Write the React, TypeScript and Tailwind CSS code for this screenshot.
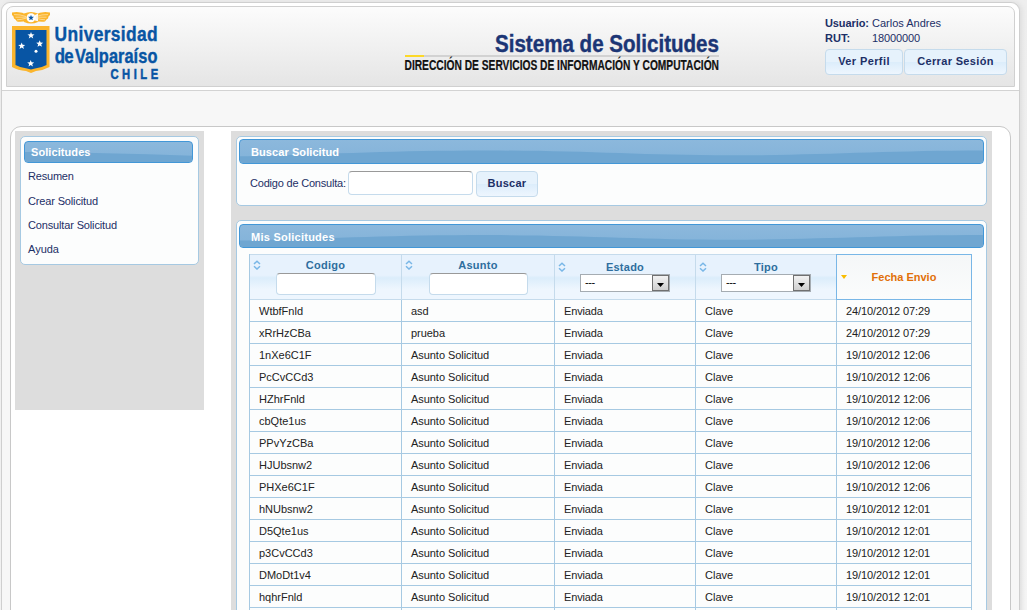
import React from "react";

const rows: [string, string, string][] = [
  ["WtbfFnld", "asd", "24/10/2012 07:29"],
  ["xRrHzCBa", "prueba", "24/10/2012 07:29"],
  ["1nXe6C1F", "Asunto Solicitud", "19/10/2012 12:06"],
  ["PcCvCCd3", "Asunto Solicitud", "19/10/2012 12:06"],
  ["HZhrFnld", "Asunto Solicitud", "19/10/2012 12:06"],
  ["cbQte1us", "Asunto Solicitud", "19/10/2012 12:06"],
  ["PPvYzCBa", "Asunto Solicitud", "19/10/2012 12:06"],
  ["HJUbsnw2", "Asunto Solicitud", "19/10/2012 12:06"],
  ["PHXe6C1F", "Asunto Solicitud", "19/10/2012 12:06"],
  ["hNUbsnw2", "Asunto Solicitud", "19/10/2012 12:01"],
  ["D5Qte1us", "Asunto Solicitud", "19/10/2012 12:01"],
  ["p3CvCCd3", "Asunto Solicitud", "19/10/2012 12:01"],
  ["DMoDt1v4", "Asunto Solicitud", "19/10/2012 12:01"],
  ["hqhrFnld", "Asunto Solicitud", "19/10/2012 12:01"],
];

const GRID = "grid grid-cols-[152px_153px_141px_141px_135px]";
const STAR = "M0-3.6L.9-1.2 3.5-1.1 1.5.5 2.2 3 0 1.6-2.2 3-1.5.5-3.5-1.1-.9-1.2Z";

function Logo() {
  return (
    <svg className="block overflow-visible" width="150" height="72" viewBox="10 10 150 72" fontFamily="'Liberation Sans', Arial, sans-serif" fontWeight="bold" fill="#0855a4">
      <path d="M12 12.500Q21 11 27 15V20.500Q21 22.500 17 21.500L15.500 19.500 14 18.500 13.500 16.500 12 15ZM50 12.500Q41 11 35 15V20.500Q41 22.500 45 21.500L46.500 19.500 48 18.500 48.500 16.500 50 15ZM24 13.500Q31 10.500 38 13.500V22Q31 25 24 22Z" fill="#fbb52c" />
      <path d="M14 14.600Q20 14.300 26 16.500M15.500 17.200H26M17 19.800Q21 19.700 26 18.200M48 14.600Q42 14.300 36 16.500M46.500 17.200H36M45 19.800Q41 19.700 36 18.200" stroke="#fdf0d4" strokeWidth=".6" fill="none" />
      <circle cx="31" cy="17.700" r="4.500" fill="#fff" />
      <path transform="translate(31 17.800) scale(.85)" d={STAR} />
      <path d="M12 26H49.500V67Q43 70.500 36 71L31 73 26 71Q18 70.500 12 67Z" fill="#fbb52c" />
      <path d="M15.500 30H46.500V65Q41 68 35 68.500L31 69.500 27 68.500Q21 68 15.500 65Z" />
      <g fill="#fff">
        <path transform="translate(31 35.500)" d={STAR} />
        <path transform="translate(21.700 46)" d={STAR} />
        <path transform="translate(39.700 43.800)" d={STAR} />
        <path transform="translate(30.700 63.500)" d={STAR} />
        <circle cx="36" cy="51.200" r="1.500" />
      </g>
      <g fontSize="20" stroke="#0855a4" strokeWidth=".4">
        <text transform="translate(54.600 41) scale(.87 1)" textLength="118.500" lengthAdjust="spacing">Universidad</text>
        <text transform="translate(54.800 62.500) scale(.84 1)" textLength="22.500" lengthAdjust="spacing">de</text>
        <text transform="translate(75 62.500) scale(.82 1)" textLength="100.500" lengthAdjust="spacing">Valparaíso</text>
      </g>
      <text transform="translate(110.500 79) scale(.8 1)" fontSize="14" textLength="59.500" lengthAdjust="spacing" stroke="#0855a4" strokeWidth=".5">CHILE</text>
    </svg>
  );
}

function Banner() {
  return (
    <svg className="block overflow-visible" width="318" height="44" viewBox="403 30 318 44" fontFamily="'Liberation Sans', Arial, sans-serif" fontWeight="bold">
      <path d="M405 56H719" stroke="#d2d2d2" strokeWidth="2" />
      <path d="M405 56H424" stroke="#fcd828" strokeWidth="2" />
      <text x="495" y="51.500" fontSize="23.500" fill="#1b3575" stroke="#1b3575" strokeWidth=".4" textLength="224" lengthAdjust="spacingAndGlyphs">Sistema de Solicitudes</text>
      <text x="404.500" y="70" fontSize="14" fill="#111" stroke="#111" strokeWidth=".2" textLength="314.500" lengthAdjust="spacingAndGlyphs">DIRECCIÓN DE SERVICIOS DE INFORMACIÓN Y COMPUTACIÓN</text>
    </svg>
  );
}

function TitleBar({ text, className, wide }: { text: string; className: string; wide?: boolean }) {
  return (
    <div className={"relative overflow-hidden rounded-[4px] border border-[#4297d7] bg-linear-to-b from-[#8cb8dc] to-[#82b2d9] font-bold tracking-[0.08px] text-white " + className}>
      <svg className="absolute inset-0 h-full w-full" preserveAspectRatio="none" viewBox={wide ? "0 0 745 24" : "0 0 169 22"}>
        <path fill="#6fa6d1" d={wide ? "M0 17C90 15 150 11 248 11S400 16 492 16S650 11 745 11V24H0Z" : "M0 11C50 11 110 13 169 15V22H0Z"} />
      </svg>
      <span className="relative">{text}</span>
    </div>
  );
}

function Button({ children, className }: { children: React.ReactNode; className: string }) {
  return (
    <button className={"rounded-[4px] border border-[#c5dbec] bg-[linear-gradient(#e6f2fc_0%,#e6f2fc_48%,#dcedfb_52%,#eef6fe_100%)] pb-[2px] font-bold whitespace-nowrap text-[#1c2f66] " + className}>
      {children}
    </button>
  );
}

function SortIcon() {
  return (
    <svg className="absolute left-[3px] top-[6px]" width="8" height="10" viewBox="0 0 8 10" fill="none" stroke="#79b7e7" strokeWidth="1.500">
      <path d="M1 4L4 1.200 7 4M1 6.200L4 9 7 6.200" />
    </svg>
  );
}

const HEAD = "relative border-r border-[#c5dbec] bg-[linear-gradient(#e7f2fd_0%,#e7f2fd_46%,#dbedfb_52%,#eef6fe_78%,#eef6fe_100%)] text-center font-bold tracking-[0.25px] text-[#2e6e9e]";
const FIELD = "rounded-[4px] border border-[#c5dbec] border-t-[#999] bg-white outline-none";

function SelectHead({ label }: { label: string }) {
  return (
    <div className={HEAD + " flex flex-col items-center pt-[6px]"}>
      <span className="absolute left-0 top-px"><SortIcon /></span>
      <span className="leading-[13px]">{label}</span>
      <div className="flex h-[18px] w-[90px] justify-between border border-[#a5acb2] bg-white text-left font-normal text-black">
        <span className="pl-[4px] leading-[15px] tracking-[-0.4px]">---</span>
        <span className="flex h-4 w-[17px] items-center justify-center border border-[#707070] bg-linear-to-b from-[#f2f2f2] to-[#cfcfcf]">
          <svg width="7" height="4" viewBox="0 0 7 4" className="mt-[3px]"><path d="M0 0H7L3.500 4Z" /></svg>
        </span>
      </div>
    </div>
  );
}

export default function App() {
  return (
    <div className="h-[610px] w-[1027px] overflow-hidden bg-linear-to-b from-[#eeeeee] to-[#f6f6f6] pl-px pt-[2px] font-['Liberation_Sans',Arial,sans-serif] text-[11px] leading-[13px] text-[#1c2f66]">
      <div className="flex h-[620px] w-[1019px] flex-col rounded-t-[9px] border border-[#cfcfcf] bg-[#f7f7f7] shadow-[2px_0_5px_#ddd]">
        <header className="h-[88px] shrink-0 rounded-t-[9px] border-b border-[#d3d3d3] bg-white px-[4px] pt-[3px]">
          <div className="flex h-[81px] justify-between rounded-t-[7px] border border-[#d0d0d0] bg-linear-to-b from-[#fcfcfc] to-[#e5e5e5] pl-[3px] pr-[6px] pt-[3px]">
            <Logo />
            <div className="mt-5 ml-[138px] w-[318px]"><Banner /></div>
            <div className="w-[183px] pt-[7px]">
              <div className="flex h-[15px]"><b className="w-[47px] tracking-[-0.1px]">Usuario:</b><span>Carlos Andres</span></div>
              <div className="flex h-[15px]"><b className="w-[47px]">RUT:</b><span className="tracking-[-0.1px]">18000000</span></div>
              <div className="mt-[2px] flex gap-px">
                <Button className="h-[26px] w-[78px] tracking-[0.4px]">Ver Perfil</Button>
                <Button className="h-[26px] w-[103px] tracking-[0.35px]">Cerrar Sesión</Button>
              </div>
            </div>
          </div>
        </header>

        <main className="ml-[8px] mt-[35px] flex h-[500px] w-[1001px] shrink-0 items-start rounded-t-[11px] border border-[#c8c8c8] bg-white pl-[4px] pt-[4px]">
          <aside className="h-[279px] w-[189px] bg-[#dddddd] pl-[5px] pt-[5px]">
            <div className="h-[129px] w-[179px] rounded-[5px] border border-[#a6c9e2] bg-[#fcfdfd] px-[3px] pt-[4px]">
              <TitleBar text="Solicitudes" className="h-[22px] w-[169px] pl-[6px] leading-[21px]" />
              <nav className="flex flex-col pl-[4px] pt-px">
                <a className="h-[25px] leading-[25px] tracking-[-0.2px]">Resumen</a>
                <a className="h-6 leading-[25px] tracking-[-0.15px]">Crear Solicitud</a>
                <a className="h-6 leading-[25px] tracking-[-0.15px]">Consultar Solicitud</a>
                <a className="h-6 leading-[25px]">Ayuda</a>
              </nav>
            </div>
          </aside>

          <section className="ml-[27px] flex h-[500px] w-[761px] flex-col gap-[14px] bg-[#dddddd] pl-[5px] pt-[5px]">
            <div className="h-[70px] w-[751px] shrink-0 rounded-[5px] border border-[#a6c9e2] bg-[#fcfdfd] px-[2px] pt-[2px]">
              <TitleBar wide text="Buscar Solicitud" className="h-[25px] w-[745px] pl-[11px] leading-[24px]" />
              <div className="flex items-start pl-[11px] pt-[7px]">
                <label className="w-[98px] leading-[24px] tracking-[-0.2px] whitespace-nowrap">Codigo de Consulta:</label>
                <input className={FIELD + " h-6 w-[125px]"} />
                <Button className="ml-[3px] h-[26px] w-[62px] tracking-[0.25px]">Buscar</Button>
              </div>
            </div>

            <div className="h-[420px] w-[751px] shrink-0 rounded-[5px] border border-[#a6c9e2] bg-[#fcfdfd] px-[2px] pt-[3px]">
              <TitleBar wide text="Mis Solicitudes" className="h-6 w-[745px] pl-[11px] leading-[25px] tracking-[0.25px]" />
              <div className="ml-[10px] mt-[6px] w-[723px] border-l border-[#a6c9e2]">
                <div className={GRID + " h-[46px] border-y border-[#c5dbec]"}>
                  <div className={HEAD + " flex flex-col items-center pt-[4px]"}>
                    <span className="absolute left-0 -top-px"><SortIcon /></span>
                    <span>Codigo</span>
                    <input className={FIELD + " mt-px h-[22px] w-[100px] shrink-0"} />
                  </div>
                  <div className={HEAD + " flex flex-col items-center pt-[4px]"}>
                    <span className="absolute left-0 -top-px"><SortIcon /></span>
                    <span>Asunto</span>
                    <input className={FIELD + " mt-px h-[22px] w-[99px] shrink-0"} />
                  </div>
                  <SelectHead label="Estado" />
                  <SelectHead label="Tipo" />
                  <div className="relative -my-px -ml-px w-[136px] border border-[#79b7e7] bg-linear-to-b from-[#f5f7f8] to-[#fbfcfc] text-center font-bold leading-[44px] text-[#e17009]">
                    <svg className="absolute left-[4px] top-[20px]" width="6" height="4" viewBox="0 0 6 4" fill="#f9bd01"><path d="M0 0H6L3 4Z" /></svg>
                    Fecha Envio
                  </div>
                </div>
                {rows.map(([code, subject, date]) => (
                  <div key={code} className={GRID + " h-[22px] border-b border-[#a6c9e2] leading-[23px] text-[#222222] *:border-r *:border-[#a6c9e2] *:pl-[9px]"}>
                    <div>{code}</div>
                    <div className="tracking-[-0.05px]">{subject}</div>
                    <div className="tracking-[-0.15px]">Enviada</div>
                    <div>Clave</div>
                    <div className="tracking-[-0.1px]">{date}</div>
                  </div>
                ))}
                <div className={GRID + " h-[22px] *:border-r *:border-[#a6c9e2]"}><div /><div /><div /><div /><div /></div>
              </div>
            </div>
          </section>
        </main>
      </div>
    </div>
  );
}
